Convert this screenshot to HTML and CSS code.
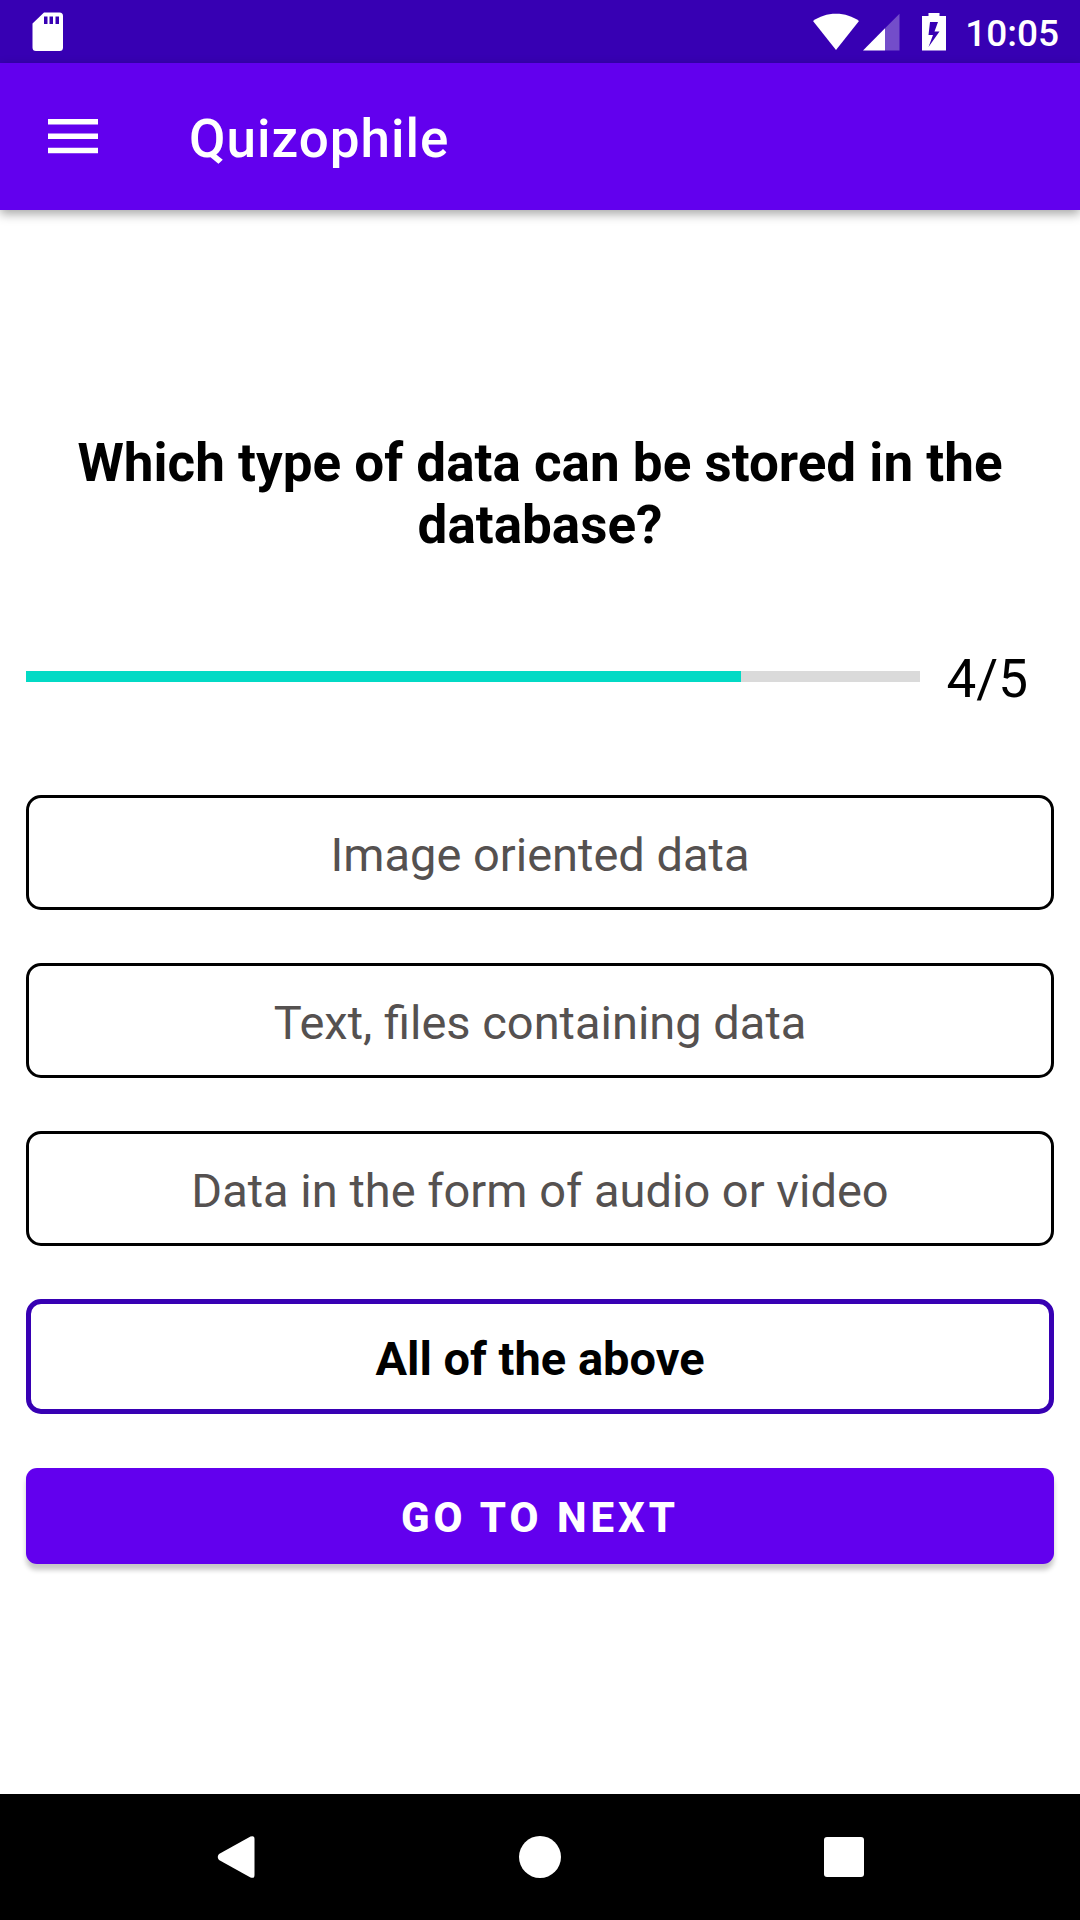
FILE: index.html
```html
<!DOCTYPE html>
<html lang="en">
<head>
  <meta charset="utf-8">
  <meta name="viewport" content="width=device-width, initial-scale=1">
  <title>Quizophile</title>
  <link rel="stylesheet" href="styles.css">
</head>
<body>
  <div class="status-bar">
    <svg class="status-sd" width="32" height="40" viewBox="0 0 32 40" aria-hidden="true">
      <path fill="#fff" fill-rule="evenodd" d="M12 .5H27.500a3.500 3.500 0 0 1 3.500 3.500V35.500a3.500 3.500 0 0 1-3.500 3.500H4a3.500 3.500 0 0 1-3.500-3.500V11.500zM12 4.500v7.500h3.500V4.500zM17.500 4.500v7.500h3.500V4.500zM23.500 4.500v7.500h3.500V4.500z"/>
    </svg>
    <div class="status-icons">
      <svg width="46" height="38" viewBox="0 0 46 38" aria-hidden="true">
        <path fill="#fff" d="M0 8C6.500 3.500 14 .8 23 .8S39.500 3.500 46 8L23 37z"/>
      </svg>
      <svg class="status-signal" width="37" height="38" viewBox="0 0 37 38" aria-hidden="true">
        <path fill="#fff" fill-opacity=".3" d="M36.500.8V37.500H22V15.200z"/>
        <path fill="#fff" d="M0 37.500H22V15.200z"/>
      </svg>
      <svg class="status-battery" width="24" height="38" viewBox="0 0 24 38" aria-hidden="true">
        <path fill="#fff" fill-rule="evenodd" d="M6.500 0H17.500V3H24V37.500H0V3H6.500zM8 9L6.500 22H11L6.500 34L17.500 18.500H12.500L16 9z"/>
      </svg>
      <time class="clock">10:05</time>
    </div>
  </div>

  <header class="app-bar">
    <button class="menu-button" type="button" aria-label="Open menu">
      <svg width="50" height="36" viewBox="0 0 50 36" aria-hidden="true">
        <path fill="#fff" d="M0 0H50V5.500H0zM0 14.500H50V20H0zM0 28.700H50V34.200H0z"/>
      </svg>
    </button>
    <h1 class="app-title">Quizophile</h1>
  </header>

  <main class="quiz">
    <h2 class="question" id="question">Which type of data can be stored in the database?</h2>

    <div class="progress-row">
      <progress class="progress" value="4" max="5" aria-labelledby="progress-text"></progress>
      <span class="progress-text" id="progress-text">4/5</span>
    </div>

    <div class="options" role="radiogroup" aria-labelledby="question">
      <label class="option"><input class="option-input" type="radio" name="answer" value="1">Image oriented data</label>
      <label class="option"><input class="option-input" type="radio" name="answer" value="2">Text, files containing data</label>
      <label class="option"><input class="option-input" type="radio" name="answer" value="3">Data in the form of audio or video</label>
      <label class="option"><input class="option-input" type="radio" name="answer" value="4" checked>All of the above</label>
    </div>

    <button class="next-button" type="button">GO TO NEXT</button>
  </main>

  <nav class="nav-bar" aria-label="System">
    <button class="nav-button" type="button" aria-label="Back">
      <svg width="42" height="42" viewBox="0 0 42 42" aria-hidden="true">
        <path fill="#fff" d="M4 18L35.500.6Q39.500-1 39.500 3V39Q39.500 43 35.500 41.400L4 24Q1.500 21 4 18z"/>
      </svg>
    </button>
    <button class="nav-button" type="button" aria-label="Home">
      <svg width="42" height="42" viewBox="0 0 42 42" aria-hidden="true">
        <circle cx="21" cy="21" r="21" fill="#fff"/>
      </svg>
    </button>
    <button class="nav-button" type="button" aria-label="Recent apps">
      <svg width="42" height="42" viewBox="0 0 42 42" aria-hidden="true">
        <rect x="1" y="1" width="40" height="40" rx="3" fill="#fff"/>
      </svg>
    </button>
  </nav>
</body>
</html>
```
FILE: styles.css
```css
* {
  box-sizing: border-box;
}

body {
  margin: 0;
  min-height: 100vh;
  display: flex;
  flex-direction: column;
  background: #fff;
  color: #000;
  font-family: Roboto, "Noto Sans", sans-serif;
}

button {
  border: 0;
  padding: 0;
  font: inherit;
  color: inherit;
  background: none;
  cursor: pointer;
}

svg {
  display: block;
}

.status-bar {
  display: flex;
  align-items: center;
  justify-content: space-between;
  height: 63px;
  padding: 0 21px 0 32px;
  background: #3700b3;
  color: #fff;
}

.status-icons {
  display: flex;
  align-items: center;
}

.status-signal {
  margin-left: 4px;
}

.status-battery {
  margin-left: 22px;
}

.clock {
  margin-left: 19px;
  padding-top: 4px;
  font-size: 37px;
  font-weight: 500;
  line-height: 44px;
}

.app-bar {
  display: flex;
  align-items: center;
  gap: 91px;
  height: 147px;
  padding: 0 48px;
  background: #6200ee;
  color: #fff;
  box-shadow: 0 4px 10px rgba(0, 0, 0, 0.35);
}

.app-title {
  margin: 0;
  padding-top: 4px;
  font-size: 53px;
  font-weight: 500;
  line-height: 62px;
  letter-spacing: 1px;
}

.quiz {
  flex: 1;
  display: flex;
  flex-direction: column;
  justify-content: center;
  padding: 0 26px 8px;
}

.question {
  margin: 0 0 92px;
  font-size: 53px;
  font-weight: 700;
  line-height: 62px;
  text-align: center;
}

.progress-row {
  display: flex;
  align-items: center;
  gap: 27px;
  margin-bottom: 85px;
  padding-right: 26px;
}

.progress {
  flex: 1;
  min-width: 0;
  height: 11px;
  margin-bottom: 6px;
  border: 0;
  background: #dadada;
  appearance: none;
}

.progress::-webkit-progress-bar {
  background: #dadada;
}

.progress::-webkit-progress-value {
  background: #03dac5;
}

.progress::-moz-progress-bar {
  background: #03dac5;
}

.progress-text {
  font-size: 53px;
  line-height: 62px;
}

.options {
  display: flex;
  flex-direction: column;
  gap: 53px;
  margin-bottom: 54px;
}

.option {
  display: flex;
  align-items: center;
  justify-content: center;
  min-height: 115px;
  padding-top: 4px;
  border: 3px solid #000;
  border-radius: 15px;
  color: #555150;
  font-size: 47px;
  line-height: 55px;
  text-align: center;
  cursor: pointer;
}

.option:has(:checked) {
  border: 5px solid #3700b3;
  color: #000;
  font-weight: 700;
}

.option-input {
  position: absolute;
  margin: 0;
  opacity: 0;
  pointer-events: none;
}

.next-button {
  min-height: 96px;
  padding-top: 4px;
  border-radius: 11px;
  background: #6200ee;
  color: #fff;
  font-size: 42px;
  font-weight: 800;
  line-height: 50px;
  letter-spacing: 4px;
  box-shadow: 0 6px 5px rgba(0, 0, 0, 0.22);
}

.nav-bar {
  display: flex;
  height: 126px;
  padding: 0 84px;
  background: #000;
}

.nav-button {
  flex: 1;
  display: flex;
  align-items: center;
  justify-content: center;
}
```
